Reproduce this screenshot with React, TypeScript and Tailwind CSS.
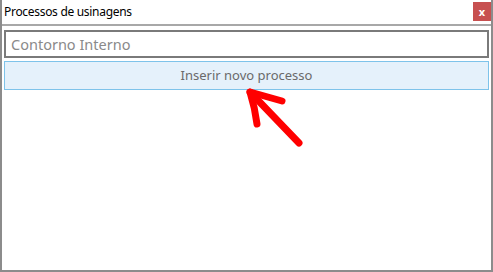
export default function App() {
    return (
        <div className="relative w-[493px] h-[272px] bg-white border-x-2 border-b-2 border-[#8c8c8c] font-['Noto_Sans',sans-serif] overflow-hidden">
            {/* Title bar */}
            <div className="flex items-center justify-between h-[26px] border-b-2 border-[#a8a8a8] pl-[2px]">
                <span className="text-[12px] text-black leading-none tracking-[-0.3px]">
                    Processos de usinagens
                </span>
                <div className="flex items-center justify-center w-[18px] h-[19px] mb-[2px] bg-[#c75050] text-white text-[11px] font-bold leading-none">
                    x
                </div>
            </div>

            {/* Content */}
            <div className="flex flex-col gap-[3px] px-[2px] pt-[4px]">
                <div className="flex items-center h-[28px] border-2 border-[#7a7a7a] px-[5px]">
                    <span className="text-[14.5px] text-[#8a8a8a] leading-none">Contorno Interno</span>
                </div>
                <button className="flex items-center justify-center h-[29px] bg-[#e5f1fb] border border-[#7ec3ea] text-[13px] text-[#6a6a6a] leading-none">
                    Inserir novo processo
                </button>
            </div>

            {/* Annotation arrow */}
            <svg className="absolute left-0 top-0 pointer-events-none" width="493" height="272">
                <g stroke="#ff0000" strokeWidth="7" strokeLinecap="round" strokeLinejoin="round" fill="none">
                    <path d="M297 143 L249 93" />
                    <path d="M248 92 Q262 96 280 101" />
                    <path d="M248 92 Q253 108 255 124" />
                </g>
            </svg>
        </div>
    );
}
